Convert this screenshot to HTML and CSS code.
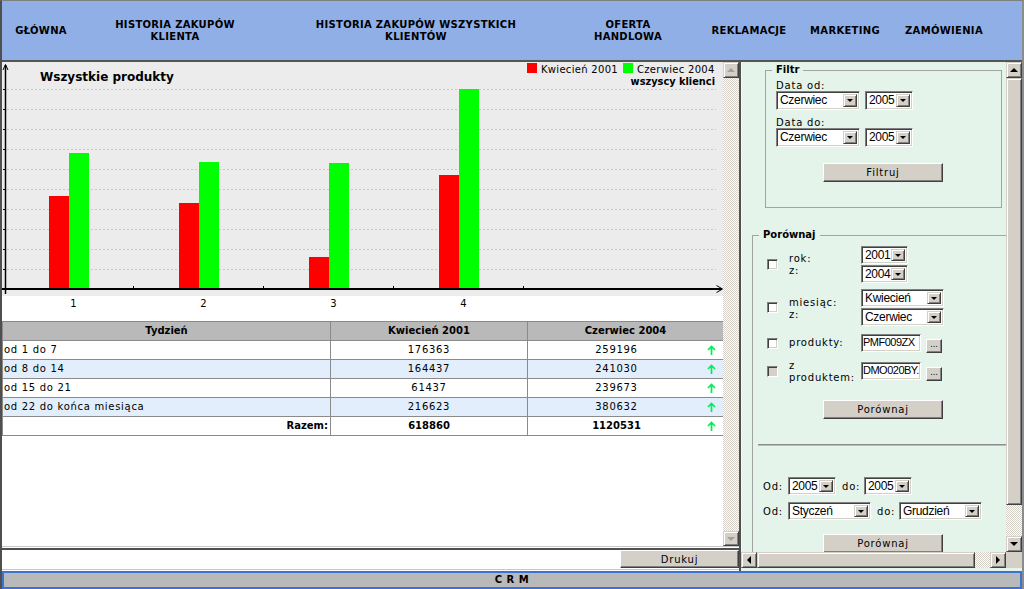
FILE: index.html
```html
<!DOCTYPE html>
<html lang="pl">
<head>
<meta charset="utf-8">
<title>CRM</title>
<link rel="stylesheet" href="styles.css">
</head>
<body>
<div class="frame">
  <nav class="nav">
    <div class="nav-item">GŁÓWNA</div>
    <div class="nav-item">HISTORIA ZAKUPÓW<br>KLIENTA</div>
    <div class="nav-item">HISTORIA ZAKUPÓW WSZYSTKICH<br>KLIENTÓW</div>
    <div class="nav-item">OFERTA<br>HANDLOWA</div>
    <div class="nav-item">REKLAMACJE</div>
    <div class="nav-item">MARKETING</div>
    <div class="nav-item">ZAMÓWIENIA</div>
    <div></div>
  </nav>

  <div class="main">
    <section class="left">
      <div class="left-scroll">
        <div class="left-content">
          <svg class="chart" width="721" height="256" viewBox="0 0 721 256">
            <rect x="0" y="0" width="721" height="234" fill="#ececec"/>
            <g stroke="#c8c8c8" stroke-dasharray="2 2" stroke-width="1">
              <line x1="5" x2="714" y1="27.5" y2="27.5"/>
              <line x1="5" x2="714" y1="47.5" y2="47.5"/>
              <line x1="5" x2="714" y1="67.5" y2="67.5"/>
              <line x1="5" x2="714" y1="87.5" y2="87.5"/>
              <line x1="5" x2="714" y1="107.5" y2="107.5"/>
              <line x1="5" x2="714" y1="127.5" y2="127.5"/>
              <line x1="5" x2="714" y1="147.5" y2="147.5"/>
              <line x1="5" x2="714" y1="167.5" y2="167.5"/>
              <line x1="5" x2="714" y1="187.5" y2="187.5"/>
              <line x1="5" x2="714" y1="207.5" y2="207.5"/>
            </g>
            <g stroke="#000" stroke-width="1">
              <line x1="1" x2="3" y1="27.5" y2="27.5"/>
              <line x1="1" x2="3" y1="47.5" y2="47.5"/>
              <line x1="1" x2="3" y1="67.5" y2="67.5"/>
              <line x1="1" x2="3" y1="87.5" y2="87.5"/>
              <line x1="1" x2="3" y1="107.5" y2="107.5"/>
              <line x1="1" x2="3" y1="127.5" y2="127.5"/>
              <line x1="1" x2="3" y1="147.5" y2="147.5"/>
              <line x1="1" x2="3" y1="167.5" y2="167.5"/>
              <line x1="1" x2="3" y1="187.5" y2="187.5"/>
              <line x1="1" x2="3" y1="207.5" y2="207.5"/>
              <line x1="131.5" x2="131.5" y1="224" y2="226"/>
              <line x1="261.5" x2="261.5" y1="224" y2="226"/>
              <line x1="391.5" x2="391.5" y1="224" y2="226"/>
              <line x1="521.5" x2="521.5" y1="224" y2="226"/>
            </g>
            <rect x="47" y="134" width="20" height="92" fill="#ff0000"/>
            <rect x="67" y="91" width="20" height="135" fill="#00ff00"/>
            <rect x="177" y="141" width="20" height="85" fill="#ff0000"/>
            <rect x="197" y="100" width="20" height="126" fill="#00ff00"/>
            <rect x="307" y="195" width="20" height="31" fill="#ff0000"/>
            <rect x="327" y="101" width="20" height="125" fill="#00ff00"/>
            <rect x="437" y="113" width="20" height="113" fill="#ff0000"/>
            <rect x="457" y="27" width="20" height="199" fill="#00ff00"/>
            <line x1="3.5" y1="3" x2="3.5" y2="232" stroke="#000" stroke-width="1.5"/>
            <path d="M1 8 L3.5 2.5 L6 8" fill="none" stroke="#000" stroke-width="1"/>
            <line x1="0" y1="227" x2="720" y2="227" stroke="#000" stroke-width="2"/>
            <path d="M714.5 223.5 L720.5 227 L714.5 230.5" fill="none" stroke="#000" stroke-width="1"/>
            <text class="ch-title" x="38" y="19">Wszystkie produkty</text>
            <rect x="525" y="1" width="10" height="10" fill="#ff0000"/>
            <text class="ch-legend" x="539" y="11">Kwiecień 2001</text>
            <rect x="621" y="1" width="10" height="10" fill="#00ff00"/>
            <text class="ch-legend" x="635" y="11">Czerwiec 2004</text>
            <text class="ch-sub" x="713" y="23" text-anchor="end">wszyscy klienci</text>
            <text class="ch-axis" x="71.5" y="245" text-anchor="middle">1</text>
            <text class="ch-axis" x="201.5" y="245" text-anchor="middle">2</text>
            <text class="ch-axis" x="331.5" y="245" text-anchor="middle">3</text>
            <text class="ch-axis" x="461.5" y="245" text-anchor="middle">4</text>
          </svg>

          <table class="data">
            <colgroup><col class="c1"><col class="c2"><col class="c3"></colgroup>
            <thead>
              <tr><th>Tydzień</th><th>Kwiecień 2001</th><th>Czerwiec 2004</th></tr>
            </thead>
            <tbody>
              <tr>
                <td class="t-label">od 1 do 7</td>
                <td class="t-num">176363</td>
                <td><div class="c3-wrap"><span class="t-num">259196</span><svg class="up" width="9" height="10" viewBox="0 0 9 10"><path d="M4.5 10V1.5M1 5L4.5 1.5L8 5" fill="none" stroke="#00ee55" stroke-width="1.7"/></svg></div></td>
              </tr>
              <tr class="alt">
                <td class="t-label">od 8 do 14</td>
                <td class="t-num">164437</td>
                <td><div class="c3-wrap"><span class="t-num">241030</span><svg class="up" width="9" height="10" viewBox="0 0 9 10"><path d="M4.5 10V1.5M1 5L4.5 1.5L8 5" fill="none" stroke="#00ee55" stroke-width="1.7"/></svg></div></td>
              </tr>
              <tr>
                <td class="t-label">od 15 do 21</td>
                <td class="t-num">61437</td>
                <td><div class="c3-wrap"><span class="t-num">239673</span><svg class="up" width="9" height="10" viewBox="0 0 9 10"><path d="M4.5 10V1.5M1 5L4.5 1.5L8 5" fill="none" stroke="#00ee55" stroke-width="1.7"/></svg></div></td>
              </tr>
              <tr class="alt">
                <td class="t-label">od 22 do końca miesiąca</td>
                <td class="t-num">216623</td>
                <td><div class="c3-wrap"><span class="t-num">380632</span><svg class="up" width="9" height="10" viewBox="0 0 9 10"><path d="M4.5 10V1.5M1 5L4.5 1.5L8 5" fill="none" stroke="#00ee55" stroke-width="1.7"/></svg></div></td>
              </tr>
              <tr class="total">
                <td class="t-razem">Razem:</td>
                <td class="t-num">618860</td>
                <td><div class="c3-wrap"><span class="t-num">1120531</span><svg class="up" width="9" height="10" viewBox="0 0 9 10"><path d="M4.5 10V1.5M1 5L4.5 1.5L8 5" fill="none" stroke="#00ee55" stroke-width="1.7"/></svg></div></td>
              </tr>
            </tbody>
          </table>
        </div>
        <div class="vscroll">
          <div class="sb-btn"><span class="tri tri-up dis"></span></div>
          <div class="sb-track"></div>
          <div class="sb-btn sb-last"><span class="tri tri-down dis"></span></div>
        </div>
      </div>
      <div class="left-foot">
        <div class="left-foot-bar">
          <div class="btn btn-drukuj">Drukuj</div>
        </div>
      </div>
    </section>

    <section class="right">
      <div class="right-scroll">
        <div class="right-content">
          <fieldset class="fs fs-filtr">
            <legend>Filtr</legend>
            <div class="lbl">Data od:</div>
            <div class="sel-row">
              <div class="sel w84"><span class="sel-val">Czerwiec</span><span class="sel-btn"><span class="tri tri-down"></span></span></div>
              <div class="sel w48"><span class="sel-val">2005</span><span class="sel-btn"><span class="tri tri-down"></span></span></div>
            </div>
            <div class="lbl mt8">Data do:</div>
            <div class="sel-row">
              <div class="sel w84"><span class="sel-val">Czerwiec</span><span class="sel-btn"><span class="tri tri-down"></span></span></div>
              <div class="sel w48"><span class="sel-val">2005</span><span class="sel-btn"><span class="tri tri-down"></span></span></div>
            </div>
            <div class="btn btn-wide btn-filtr">Filtruj</div>
          </fieldset>

          <fieldset class="fs fs-cmp">
            <legend>Porównaj</legend>
            <div class="cmp-row">
              <span class="cb"></span>
              <div class="lbl2">rok:<br>z:</div>
              <div class="ctl-col">
                <div class="sel w47 h18"><span class="sel-val">2001</span><span class="sel-btn"><span class="tri tri-down"></span></span></div>
                <div class="sel w47 h18"><span class="sel-val">2004</span><span class="sel-btn"><span class="tri tri-down"></span></span></div>
              </div>
            </div>
            <div class="cmp-row mt6">
              <span class="cb"></span>
              <div class="lbl2 lbl-shift">miesiąc:<br>z:</div>
              <div class="ctl-col">
                <div class="sel w83 h18"><span class="sel-val">Kwiecień</span><span class="sel-btn"><span class="tri tri-down"></span></span></div>
                <div class="sel w83 h18"><span class="sel-val">Czerwiec</span><span class="sel-btn"><span class="tri tri-down"></span></span></div>
              </div>
            </div>
            <div class="cmp-row mt8">
              <span class="cb"></span>
              <div class="lbl2">produkty:</div>
              <div class="ctl-line">
                <div class="inp">PMF009ZX</div>
                <div class="dots">...</div>
              </div>
            </div>
            <div class="cmp-row mt10">
              <span class="cb cb-dis"></span>
              <div class="lbl2 lbl-tall">z<br>produktem:</div>
              <div class="ctl-line">
                <div class="inp">DMO020BY.</div>
                <div class="dots">...</div>
              </div>
            </div>
            <div class="btn btn-wide btn-cmp1">Porównaj</div>
            <div class="sep"></div>
            <div class="od-row od-row1">
              <span class="od-lbl">Od:</span>
              <div class="sel w48 h18"><span class="sel-val">2005</span><span class="sel-btn"><span class="tri tri-down"></span></span></div>
              <span class="do-lbl">do:</span>
              <div class="sel w48 h18"><span class="sel-val">2005</span><span class="sel-btn"><span class="tri tri-down"></span></span></div>
            </div>
            <div class="od-row od-row2">
              <span class="od-lbl">Od:</span>
              <div class="sel w83 h18"><span class="sel-val">Styczeń</span><span class="sel-btn"><span class="tri tri-down"></span></span></div>
              <span class="do-lbl">do:</span>
              <div class="sel w83 h18"><span class="sel-val">Grudzień</span><span class="sel-btn"><span class="tri tri-down"></span></span></div>
            </div>
            <div class="btn btn-wide btn-cmp2">Porównaj</div>
          </fieldset>
        </div>
        <div class="vscroll">
          <div class="sb-btn"><span class="tri tri-up"></span></div>
          <div class="sb-thumb"></div>
          <div class="sb-track"></div>
          <div class="sb-btn"><span class="tri tri-down"></span></div>
        </div>
      </div>
      <div class="hscroll">
        <div class="sb-btn"><span class="tri tri-left"></span></div>
        <div class="sb-thumb"></div>
        <div class="sb-track"></div>
        <div class="sb-btn"><span class="tri tri-right"></span></div>
        <div class="sb-corner"></div>
      </div>
    </section>
  </div>

  <footer class="status">C R M</footer>
</div>
</body>
</html>
```

FILE: styles.css
```css
* { box-sizing: border-box; }
html, body { margin: 0; padding: 0; }
body {
  width: 1024px;
  height: 589px;
  overflow: hidden;
  background: #fff;
  font-family: "DejaVu Sans", Verdana, sans-serif;
  font-size: 10px;
  color: #000;
}

.frame {
  width: 1024px;
  height: 589px;
  border-top: 1px solid #808080;
  border-left: 2px solid #4f4f4f;
  border-right: 2px solid #8c8c8c;
  display: grid;
  grid-template-rows: 61px 509px 18px;
}

/* NAV */
.nav {
  background: #91afe7;
  border-bottom: 2px solid #555;
  display: grid;
  grid-template-columns: 78px 190px 292px 132px 110px 82px 116px 1fr;
  align-items: center;
}
.nav-item {
  text-align: center;
  font-weight: bold;
  font-size: 10px;
  line-height: 12px;
  letter-spacing: 0.3px;
}

/* MAIN */
.main {
  display: grid;
  grid-template-columns: 737px 283px;
  min-height: 0;
}

.left {
  display: flex;
  flex-direction: column;
  background: #fff;
  min-height: 0;
}
.left-scroll {
  height: 484px;
  flex: none;
  display: grid;
  grid-template-columns: 721px 16px;
}
.left-content { overflow: hidden; background: #fff; }
.chart { display: block; }
.ch-title { font-family: "DejaVu Sans", sans-serif; font-weight: bold; font-size: 12px; }
.ch-legend { font-family: "DejaVu Sans", sans-serif; font-size: 10px; letter-spacing: 0.3px; }
.ch-sub { font-family: "DejaVu Sans", sans-serif; font-weight: bold; font-size: 9.8px; }
.ch-axis { font-family: "DejaVu Sans", sans-serif; font-size: 10px; }

.data {
  margin-top: 3px;
  width: 721px;
  border-collapse: collapse;
  table-layout: fixed;
}
.data .c1 { width: 328px; }
.data .c2 { width: 197px; }
.data .c3 { width: 196px; }
.data tr { height: 19px; }
.data th, .data td {
  border: 1px solid #8a8a8a;
  padding: 0;
  font-size: 10px;
  line-height: 12px;
  white-space: nowrap;
}
.data th {
  background: #b9b9b9;
  font-weight: bold;
  text-align: center;
}
.data td { letter-spacing: 0.7px; }
.data tr.alt td { background: #e2eefb; }
.t-label { padding-left: 1px !important; }
.t-num { text-align: center; }
.t-razem { text-align: right; font-weight: bold; letter-spacing: 0 !important; padding-right: 2px !important; }
.total .t-num { font-weight: bold; letter-spacing: 0; }
.c3-wrap {
  display: grid;
  grid-template-columns: 1fr 18px;
  align-items: center;
}
.up { display: block; margin-left: 2px; }

.left-foot {
  flex: none;
  border-top: 1px solid #c8c8c8;
  padding-top: 1px;
}
.left-foot-bar {
  height: 22px;
  border-top: 2px solid #505050;
  border-bottom: 1px solid #c8c8c8;
  display: flex;
  justify-content: flex-end;
  align-items: flex-start;
}

/* generic buttons */
.btn {
  background: #d4d0c8;
  border: 1px solid;
  border-color: #fff #404040 #404040 #fff;
  box-shadow: inset -1px -1px #808080;
  font-size: 10px;
  letter-spacing: 0.8px;
  text-align: center;
  display: flex;
  align-items: center;
  justify-content: center;
}
.btn-drukuj { width: 119px; height: 18px; }
.btn-wide { width: 120px; height: 19px; }

/* scrollbars */
.vscroll { display: flex; flex-direction: column; min-height: 0; }
.sb-btn {
  width: 16px;
  height: 16px;
  flex: none;
  background: #d4d0c8;
  border: 1px solid;
  border-color: #d4d0c8 #404040 #404040 #d4d0c8;
  box-shadow: inset 1px 1px #fff, inset -1px -1px #808080;
  display: flex;
  align-items: center;
  justify-content: center;
}
.sb-last { height: 15px; }
.sb-track {
  flex: 1;
  background: repeating-conic-gradient(#d4d0c8 0 25%, #fff 0 50%) 0 0 / 2px 2px;
}
.sb-thumb {
  background: #d4d0c8;
  border: 1px solid;
  border-color: #d4d0c8 #404040 #404040 #d4d0c8;
  box-shadow: inset 1px 1px #fff, inset -1px -1px #808080;
}
.vscroll .sb-thumb { height: 427px; flex: none; }
.sb-corner { background: #d4d0c8; }

.tri { width: 0; height: 0; display: block; }
.tri-up { border-left: 4px solid transparent; border-right: 4px solid transparent; border-bottom: 4px solid #000; }
.tri-down { border-left: 4px solid transparent; border-right: 4px solid transparent; border-top: 4px solid #000; }
.tri-left { border-top: 4px solid transparent; border-bottom: 4px solid transparent; border-right: 4px solid #000; }
.tri-right { border-top: 4px solid transparent; border-bottom: 4px solid transparent; border-left: 4px solid #000; }
.tri-up.dis { border-bottom-color: #a0a0a0; }
.tri-down.dis { border-top-color: #a0a0a0; }

/* RIGHT */
.right {
  border-left: 2px solid #505050;
  background: #e4f4ea;
  display: flex;
  flex-direction: column;
  min-height: 0;
}
.right-scroll {
  height: 490px;
  flex: none;
  display: grid;
  grid-template-columns: 265px 16px;
}
.right-content {
  overflow: hidden;
  background: #e4f4ea;
  box-shadow: inset 1px 0 #f4fbf7;
}
.hscroll {
  height: 16px;
  flex: none;
  display: grid;
  grid-template-columns: 16px 218px 15px 16px 16px;
}

.fs {
  border: 1px solid #a0a4a2;
  margin: 0;
  min-width: 0;
}
.fs legend {
  font-weight: bold;
  font-size: 10px;
  line-height: 12px;
  padding: 0 4px;
}
.fs-filtr {
  width: 237px;
  margin: 2px 0 0 24px;
  padding: 5px 10px 25px 10px;
}
.fs-filtr legend { margin-left: -4px; }
.fs-cmp {
  width: 262px;
  margin: 21px 0 0 11px;
  padding: 5px 0 30px 14px;
}
.fs-cmp legend { margin-left: -8px; }

.lbl { line-height: 10px; letter-spacing: 0.8px; }
.mt8 { margin-top: 8px; }
.mt6 { margin-top: 6px; }
.mt10 { margin-top: 10px; }

.sel-row { display: flex; gap: 5px; }
.sel {
  display: flex;
  align-items: center;
  height: 19px;
  background: #fff;
  border: 1px solid;
  border-color: #808080 #fff #fff #808080;
  box-shadow: inset 1px 1px #404040, inset -1px -1px #d4d0c8;
  padding: 2px 2px 2px 2px;
}
.h18 { height: 18px; }
.w84 { width: 84px; }
.w83 { width: 83px; }
.w48 { width: 48px; }
.w47 { width: 47px; }
.sel-val {
  flex: 1;
  font-family: "Liberation Sans", Arial, sans-serif;
  font-size: 12px;
  letter-spacing: -0.3px;
  line-height: 13px;
  padding-left: 1px;
  white-space: nowrap;
  overflow: hidden;
}
.sel-btn {
  width: 14px;
  align-self: stretch;
  flex: none;
  background: #d4d0c8;
  border: 1px solid;
  border-color: #d4d0c8 #404040 #404040 #d4d0c8;
  box-shadow: inset 1px 1px #fff, inset -1px -1px #808080;
  display: flex;
  align-items: center;
  justify-content: center;
}
.sel-btn .tri-down { border-left-width: 3px; border-right-width: 3px; border-top-width: 3px; }

.btn-filtr { margin: 16px 0 0 47px; }

.cmp-row {
  display: grid;
  grid-template-columns: 22px 72px auto;
  align-items: center;
}
.cb {
  width: 11px;
  height: 11px;
  background: #fff;
  border: 1px solid;
  border-color: #808080 #fff #fff #808080;
  box-shadow: inset 1px 1px #404040, inset -1px -1px #d4d0c8;
}
.cb-dis { background: #d4d0c8; }
.lbl2 { line-height: 12px; letter-spacing: 0.8px; }
.lbl-shift { margin-top: 2px; }
.lbl-tall { margin: -3px 0 -3px 0; position: relative; top: 1px; }
.ctl-col { display: flex; flex-direction: column; gap: 1px; }
.ctl-line { display: flex; align-items: flex-end; height: 18px; }
.inp {
  width: 60px;
  height: 18px;
  background: #fff;
  border: 1px solid;
  border-color: #808080 #fff #fff #808080;
  box-shadow: inset 1px 1px #404040, inset -1px -1px #d4d0c8;
  font-family: "Liberation Sans", Arial, sans-serif;
  font-size: 11px;
  letter-spacing: -0.5px;
  line-height: 15px;
  padding-left: 1px;
  white-space: nowrap;
  overflow: hidden;
}
.dots {
  width: 16px;
  height: 14px;
  margin: 0 0 -1px 5px;
  background: #d4d0c8;
  border: 1px solid;
  border-color: #fff #404040 #404040 #fff;
  box-shadow: inset -1px -1px #808080;
  font-size: 8px;
  line-height: 10px;
  text-align: center;
}

.btn-cmp1 { margin: 20px 0 0 56px; }
.sep {
  margin: 25px 0 0 -9px;
  width: 260px;
  height: 2px;
  border-top: 1px solid #8e8e8e;
  border-bottom: 1px solid #b8bcb9;
}
.od-row { display: flex; align-items: center; margin-left: -4px; }
.od-row1 { margin-top: 31px; }
.od-row2 { margin-top: 7px; }
.od-lbl { width: 25px; letter-spacing: 0.8px; }
.do-lbl { width: 22px; margin-left: 6px; letter-spacing: 0.8px; }
.btn-cmp2 { margin: 14px 0 0 56px; }

/* STATUS */
.status {
  border: 2px solid #3c72d6;
  background: #b9b9b9;
  font-weight: bold;
  font-size: 10px;
  line-height: 14px;
  text-align: center;
  letter-spacing: 0.5px;
}
```
